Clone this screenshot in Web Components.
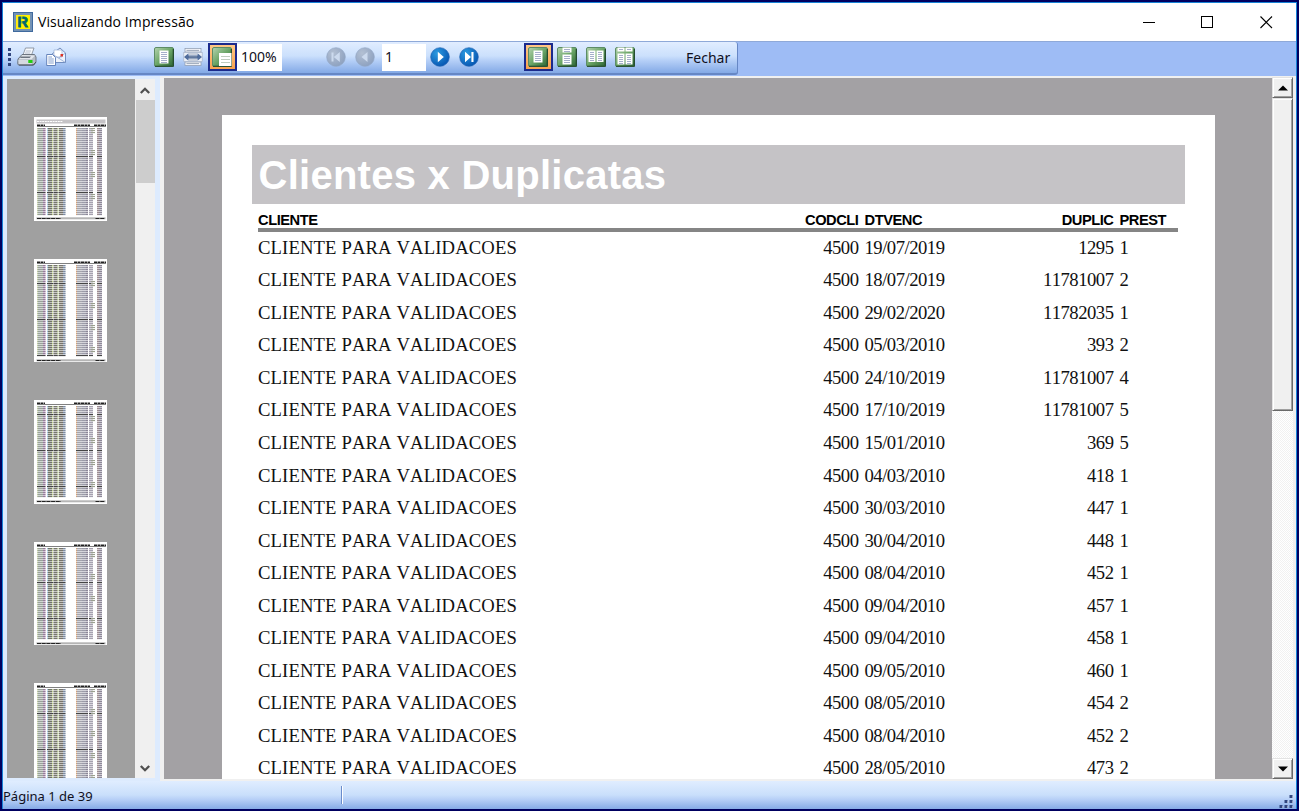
<!DOCTYPE html>
<html lang="pt-BR">
<head>
<meta charset="utf-8">
<title>Visualizando Impressão</title>
<style>
  html, body {
    margin: 0;
    width: 1299px;
    height: 811px;
    overflow: hidden;
    background: #000060;
  }
</style>
</head>
<body>
<print-preview></print-preview>
<script>
const page = (x, y, w, h) => `
  <rect x="${x}" y="${y}" width="${w}" height="${h}" fill="#fff"/>
  ${Array.from({ length: Math.floor((h - 1) / 2) }, (_, i) =>
    `<rect x="${x + 1.5}" y="${y + 1.5 + i * 2}" width="${w - 3}" height="0.9" fill="#9ba6c4"/>`).join("")}`;

const greenTile = (inner) => `
  <defs>
    <linearGradient id="g" x1="0" y1="0" x2="1" y2="1">
      <stop offset="0" stop-color="#b4d3af"/>
      <stop offset="0.5" stop-color="#6aa566"/>
      <stop offset="1" stop-color="#2c6434"/>
    </linearGradient>
  </defs>
  <rect x="0.5" y="0.5" width="19" height="19" rx="1.5" fill="url(#g)" stroke="#5d8c66"/>
  <path d="M1 19.3H19.3V2" fill="none" stroke="#1c4226" stroke-width="1.1"/>
  ${inner}`;

const navDisc = (inner, disabled) => `
  <defs>
    <radialGradient id="n" cx="0.35" cy="0.3" r="0.8">
      <stop offset="0" stop-color="${disabled ? "#b3c0d3" : "#2c9be0"}"/>
      <stop offset="1" stop-color="${disabled ? "#8b9fbe" : "#0350ae"}"/>
    </radialGradient>
  </defs>
  <circle cx="10" cy="10" r="9.3" fill="url(#n)" stroke="${disabled ? "#93a7c5" : "#2466b5"}" stroke-width="0.7"/>
  <g fill="${disabled ? "#ccdaee" : "#fff"}">${inner}</g>`;

const ICONS = {
  print: `
    <path d="M6 8L8.5 1H17L14.5 8Z" fill="#f6f9fd" stroke="#7d8793" stroke-width="0.8"/>
    <path d="M8.8 4H14M8 6H13.3" stroke="#a8b3c2" stroke-width="0.8"/>
    <path d="M1 12L5 7.5H17.5L19 10V15L16.5 18H2Q0.7 18 0.7 16.5Z" fill="#b5bbc4" stroke="#646d78" stroke-width="0.9"/>
    <path d="M5.3 8L2 12.3H14.5L18 8.5Z" fill="#e2e6eb"/>
    <path d="M4 9.5H14L12.6 11H3Z" fill="#6d7580"/>
    <path d="M1.3 13H14.8V17.5H2Z" fill="#d5dae1"/>
    <rect x="11.3" y="13" width="4.2" height="3" fill="#20d010"/>
    <path d="M2 18H16.5L19 15" fill="none" stroke="#464e58"/>`,
  mail: `
    <path d="M6 7L14 1L19.5 6V15.5H6Z" fill="#eef3fc" stroke="#6783b8" stroke-width="0.9"/>
    <path d="M8 3H16V10H8Z" fill="#fff" stroke="#8ea5cf" stroke-width="0.6"/>
    <path d="M6 7L12.5 11L19.5 6M12.5 11L19 15.3" fill="none" stroke="#8da4cf" stroke-width="0.8"/>
    <rect x="14.5" y="7" width="2.5" height="2.5" fill="#dc3326"/>
    <path d="M0.7 7.5H6.5L9.5 10.5V18.5H0.7Z" fill="#fff" stroke="#5878b3" stroke-width="0.9"/>
    <path d="M2.3 10H6M2.3 12H7.8M2.3 14H7.8M2.3 16H7.8" stroke="#7896c8" stroke-width="0.9"/>`,
  whole: greenTile(page(5.5, 3.5, 9, 13)),
  width: `
    <rect x="2" y="1.5" width="16" height="3.5" fill="#f4f6fa" stroke="#8a97ad" stroke-width="0.7"/>
    <rect x="2" y="15" width="16" height="3.5" fill="#f4f6fa" stroke="#8a97ad" stroke-width="0.7"/>
    <path d="M3.5 3.4H16M3.5 16.6H16" stroke="#8793a8" stroke-width="0.8"/>
    <rect x="0.8" y="5.5" width="18.4" height="9" fill="#eef2f8" stroke="#a7b2c6" stroke-width="0.7"/>
    <path d="M1 10L5.5 6.2V8.5H14.5V6.2L19 10L14.5 13.8V11.5H5.5V13.8Z" fill="#506d9c"/>
    <path d="M6 7H14M6 9.4H14M6 11H14M6 13H14" stroke="#8290a8" stroke-width="0.7"/>`,
  zoom: greenTile(`<rect x="7" y="6" width="12.5" height="13" fill="#fff"/>
    <path d="M9 9.5H18M9 12.5H18M9 15.5H18" stroke="#aebfae" stroke-width="0.8"/>`),
  first: navDisc(`<path d="M5.5 5.5H7.5V14.5H5.5ZM13.8 5V15L7.8 10Z"/>`, true),
  prev: navDisc(`<path d="M12.5 5V15L6.5 10Z"/>`, true),
  next: navDisc(`<path d="M7.8 4.7V15.3L13.8 10Z"/>`),
  last: navDisc(`<path d="M6 4.8V15.2L12 10ZM12.4 5H14.5V15H12.4Z"/>`),
  single: greenTile(page(5.5, 3.5, 9, 12)),
  continuous: greenTile(page(5.5, 0.5, 9, 5) + page(5.5, 7.5, 9, 10)),
  facing: greenTile(page(2.5, 3.5, 7, 11.5) + page(10.5, 3.5, 7, 11.5)),
  facingContinuous: greenTile(page(2.5, 0.5, 7, 4) + page(10.5, 0.5, 7, 4) + page(2.5, 6.5, 7, 11) + page(10.5, 6.5, 7, 11)),
};

const ROWS = [
  ["19/07/2019", "1295", "1"],
  ["18/07/2019", "11781007", "2"],
  ["29/02/2020", "11782035", "1"],
  ["05/03/2010", "393", "2"],
  ["24/10/2019", "11781007", "4"],
  ["17/10/2019", "11781007", "5"],
  ["15/01/2010", "369", "5"],
  ["04/03/2010", "418", "1"],
  ["30/03/2010", "447", "1"],
  ["30/04/2010", "448", "1"],
  ["08/04/2010", "452", "1"],
  ["09/04/2010", "457", "1"],
  ["09/04/2010", "458", "1"],
  ["09/05/2010", "460", "1"],
  ["08/05/2010", "454", "2"],
  ["08/04/2010", "452", "2"],
  ["28/05/2010", "473", "2"],
];

class TitleBar extends HTMLElement {
  constructor() {
    super();
    this.attachShadow({ mode: "open" });
    this.shadowRoot.innerHTML = `
      <style>
        :host {
          display: flex;
          align-items: center;
          flex: none;
          height: 38px;
          background: #fff;
          color: #000;
          font: 14px/20px "Open Sans", "Noto Sans", sans-serif;
        }
        .logo { width: 20px; height: 20px; margin: 0 5px 0 10px; }
        .caption { flex: 1; letter-spacing: 0.1px; white-space: nowrap; }
        .control { display: grid; place-items: center; width: 58px; height: 38px; }
        .control.close { width: 60px; }
        svg { display: block; }
      </style>
      <svg class="logo" viewBox="0 0 20 20">
        <rect width="20" height="20" fill="#406a9e"/>
        <rect x="1" y="1" width="18" height="18" fill="#7392b5"/>
        <rect x="3" y="3" width="14" height="14" fill="#fff000"/>
        <text x="4.4" y="15.3" font-family="Liberation Sans" font-size="14.5" font-weight="700" fill="#00696f" stroke="#00696f" stroke-width="0.8" textLength="11">R</text>
        <path d="M8.8 4V16" stroke="#fff000" stroke-width="0.8"/>
      </svg>
      <span class="caption"><slot></slot></span>
      <span class="control"><svg width="13" height="13" shape-rendering="crispEdges"><path d="M0 6.5H12" stroke="#000"/></svg></span>
      <span class="control"><svg width="13" height="13" shape-rendering="crispEdges"><path d="M0.5 0.5H11.5V11.5H0.5Z" fill="none" stroke="#000"/></svg></span>
      <span class="control close"><svg width="13" height="13"><path d="M0.5 0.5L12 12M12 0.5L0.5 12" stroke="#000" stroke-width="1.1"/></svg></span>
    `;
  }
}

class ToolButton extends HTMLElement {
  constructor() {
    super();
    this.attachShadow({ mode: "open" });
  }

  connectedCallback() {
    this.shadowRoot.innerHTML = `
      <style>
        :host {
          display: grid;
          place-items: center;
          box-sizing: border-box;
          width: 29px;
          height: 28px;
          border: 2px solid transparent;
        }
        :host([pressed]) {
          border-color: #1b2a8c;
          background: linear-gradient(#ffc885, #f9a24f);
        }
        svg { display: block; margin-right: 1px; }
      </style>
      <svg width="20" height="20" viewBox="0 0 20 20">${ICONS[this.getAttribute("icon")]}</svg>
    `;
  }
}

class ToolBar extends HTMLElement {
  constructor() {
    super();
    this.attachShadow({ mode: "open" });
    this.shadowRoot.innerHTML = `
      <style>
        :host {
          display: block;
          flex: none;
          height: 35px;
          box-sizing: border-box;
          border-top: 1px solid #8fa9d8;
          background: #9ebcf5;
          font: 14px/20px "Noto Sans", sans-serif;
          color: #10101c;
        }
        .strip {
          display: flex;
          box-sizing: border-box;
          width: 735px;
          height: 33px;
          padding: 1px 0 0 5px;
          background: linear-gradient(#e1edff, #cbe0fc 45%, #b5cff7 60%, #83a9e6);
          border-bottom: 2px solid #6687c5;
          border-right: 1px solid #6687c5;
          border-radius: 0 3px 3px 0;
        }
        .grip {
          width: 3px;
          height: 19px;
          margin: 5px 1px 0 0;
          background: repeating-linear-gradient(#31467f 0 3px, transparent 3px 5px);
        }
        .field {
          box-sizing: border-box;
          height: 27px;
          margin-top: 1px;
          padding-left: 3px;
          line-height: 26px;
          background: #fff;
        }
        .group { display: flex; }
        .output { margin-left: 1px; }
        .views { margin-left: 79px; }
        .zoom { width: 45px; padding-left: 4px; }
        .nav { margin-left: 40px; }
        .number { width: 44px; margin-left: 2px; }
        .layout { margin-left: 40px; }
        .close { margin-left: 46px; line-height: 29px; }
      </style>
      <div class="strip">
        <span class="grip"></span>
        <div class="group output">
          <tool-button icon="print"></tool-button>
          <tool-button icon="mail"></tool-button>
        </div>
        <div class="group views">
          <tool-button icon="whole"></tool-button>
          <tool-button icon="width"></tool-button>
          <tool-button icon="zoom" pressed></tool-button>
          <span class="field zoom">100%</span>
        </div>
        <div class="group nav">
          <tool-button icon="first"></tool-button>
          <tool-button icon="prev"></tool-button>
          <span class="field number">1</span>
          <tool-button icon="next"></tool-button>
          <tool-button icon="last"></tool-button>
        </div>
        <div class="group layout">
          <tool-button icon="single" pressed></tool-button>
          <tool-button icon="continuous"></tool-button>
          <tool-button icon="facing"></tool-button>
          <tool-button icon="facingContinuous"></tool-button>
        </div>
        <span class="close">Fechar</span>
      </div>
    `;
  }
}

class PageThumb extends HTMLElement {
  constructor() {
    super();
    this.attachShadow({ mode: "open" });
  }

  connectedCallback() {
    const titled = this.hasAttribute("titled");
    const top = titled ? 9 : 4;
    const seed = Number(this.getAttribute("seed"));
    // [x, width, colour] of every text column of the shrunken page
    const columns = [
      [3, 1, "#b9c49f"], [4, 5, "#98a29a"], [9, 2.5, "#967b9a"], [13, 1, "#9fc0d8"],
      [14, 4, "#6f7368"], [18, 1, "#c4d395"], [19.5, 4, "#77776f"], [23.5, 1, "#b8cc8b"],
      [25, 4, "#78746c"], [29, 2.5, "#7d8ca3"],
      [42, 1, "#d2a27b"], [43, 5, "#a4a4ad"], [48, 4, "#9b9ba8"], [52, 2, "#8c8798"],
      [55, 4, "#a6a2b0"], [63, 2, "#9d8c91"], [65, 3, "#8d8798"],
    ];
    let marks = "";
    for (let y = top + 2, i = 0; y < 98; y += 2, i += 1) {
      const dark = (i + seed * 5) % 18 === 14;
      columns.forEach(([x, w, fill]) => {
        marks += `<rect x="${x}" y="${y}" width="${w}" height="1.1" fill="${dark ? "#454545" : fill}"/>`;
      });
      if ((i + seed * 3) % 11 < 3) {
        marks += `<rect x="57" y="${y}" width="4" height="1.1" fill="#9aa08f"/>`;
      }
    }
    const tints = columns.map(([x, w, fill]) =>
      `<rect x="${x}" y="${top + 2}" width="${w}" height="${97 - top - 2}" fill="${fill}" opacity="0.36"/>`).join("");
    this.shadowRoot.innerHTML = `
      <style>
        :host { display: block; width: 73px; height: 103.5px; background: #fff; }
        svg { display: block; }
      </style>
      <svg width="73" height="103.5" viewBox="0 0 73 103.5">
        ${titled ? `<rect x="2.5" y="2.5" width="69" height="4" fill="#c5c3c6"/><path d="M3 4.5H29" stroke="#fff" stroke-dasharray="2 0.6"/>` : ""}
        ${tints}${marks}
        <path d="M3 ${top - 0.6}H11M40 ${top - 0.6}H56M60 ${top - 0.6}H72" stroke="#222" stroke-width="1.6" stroke-dasharray="3 0.5"/>
        <rect x="3" y="${top}" width="69" height="1" fill="#808080"/>
        <rect x="2.5" y="100.3" width="69" height="2" fill="#b5b5b5"/>
        <path d="M3 101.5H27M61.5 101.5H71" stroke="#222" stroke-width="1.2" stroke-dasharray="4 0.7"/>
      </svg>
    `;
  }
}

class ThumbList extends HTMLElement {
  constructor() {
    super();
    this.attachShadow({ mode: "open" });
    this.shadowRoot.innerHTML = `
      <style>
        :host { display: flex; height: 699px; overflow: hidden; }
        .pages {
          display: flex;
          flex-direction: column;
          gap: 38px;
          width: 128px;
          box-sizing: border-box;
          padding: 38px 0 0 27px;
          background: #a0a0a0;
          overflow: hidden;
        }
        page-thumb { flex: none; }
        .scroll {
          display: flex;
          flex-direction: column;
          align-items: center;
          width: 20px;
          background: #f0f0f0;
        }
        .arrow { display: block; width: 20px; height: 21px; }
        .thumb { width: 19px; height: 83px; background: #cdcdcd; }
        .rest { flex: 1; }
      </style>
      <div class="pages">
        <page-thumb titled seed="0"></page-thumb>
        <page-thumb seed="1"></page-thumb>
        <page-thumb seed="2"></page-thumb>
        <page-thumb seed="3"></page-thumb>
        <page-thumb seed="4"></page-thumb>
      </div>
      <div class="scroll">
        <svg class="arrow"><path d="M5.8 14L10 9.8L14.2 14" fill="none" stroke="#505050" stroke-width="2.3"/></svg>
        <div class="thumb"></div>
        <div class="rest"></div>
        <svg class="arrow"><path d="M5.8 9L10 13.2L14.2 9" fill="none" stroke="#505050" stroke-width="2.3"/></svg>
      </div>
    `;
  }
}

class ClassicScroll extends HTMLElement {
  constructor() {
    super();
    this.attachShadow({ mode: "open" });
    this.shadowRoot.innerHTML = `
      <style>
        :host {
          display: flex;
          flex-direction: column;
          width: 21px;
          background: repeating-conic-gradient(#f1f1f1 0 25%, #fff 0 50%) 0 0 / 2px 2px;
        }
        .box {
          display: grid;
          place-items: center;
          box-sizing: border-box;
          height: 21px;
          background: #f0f0f0;
          border: 1px solid;
          border-color: #e3e3e3 #696969 #696969 #e3e3e3;
          box-shadow: inset 1px 1px #fff, inset -1px -1px #a0a0a0;
        }
        .thumb { height: 313px; }
        .rest { flex: 1; }
      </style>
      <div class="box"><svg width="10" height="6"><path d="M0 5.5L5 0.5L10 5.5Z"/></svg></div>
      <div class="box thumb"></div>
      <div class="rest"></div>
      <div class="box"><svg width="10" height="6"><path d="M0 0.5L5 5.5L10 0.5Z"/></svg></div>
    `;
  }
}

class ReportPage extends HTMLElement {
  constructor() {
    super();
    this.attachShadow({ mode: "open" });
    this.shadowRoot.innerHTML = `
      <style>
        :host {
          display: block;
          box-sizing: border-box;
          width: 993px;
          padding: 30px 30px 0;
          background: #fff;
          color: #111;
          font: 18.67px/32.53px "Liberation Serif", serif;
          font-kerning: none;
        }
        h1 {
          margin: 0;
          height: 59px;
          padding-left: 7px;
          background: #c5c3c6;
          color: #fff;
          font: bold 40px/60px "Liberation Sans", sans-serif;
          letter-spacing: 0.26px;
        }
        .row {
          display: grid;
          grid-template-columns: 500px 101px 148px 107px 58px;
          margin-left: 6px;
          height: 32.53px;
          white-space: nowrap;
        }
        .head {
          width: 920px;
          height: 24px;
          border-bottom: 4px solid #858585;
          color: #000;
          font: bold 14.67px/32px "Liberation Sans", sans-serif;
          letter-spacing: -0.45px;
        }
        .rows { margin-top: -0.1px; }
        .right { text-align: right; }
        .after { padding-left: 6px; }
        .name { padding-left: 0.5px; }
        .data span { letter-spacing: -0.5px; }
        .data .name { letter-spacing: 0.13px; }
      </style>
      <h1>Clientes x Duplicatas</h1>
      <div class="row head">
        <span class="name">CLIENTE</span><span class="right">CODCLI</span><span class="after">DTVENC</span>
        <span class="right">DUPLIC</span><span class="after">PREST</span>
      </div>
      <div class="rows"></div>
    `;
    this.shadowRoot.querySelector(".rows").innerHTML = ROWS.map(([due, doc, part]) => `
      <div class="row data">
        <span class="name">CLIENTE PARA VALIDACOES</span><span class="right">4500</span><span class="after">${due}</span>
        <span class="right">${doc}</span><span class="after">${part}</span>
      </div>
    `).join("");
  }
}

class StatusBar extends HTMLElement {
  constructor() {
    super();
    this.attachShadow({ mode: "open" });
    this.shadowRoot.innerHTML = `
      <style>
        :host {
          display: flex;
          flex: none;
          height: 28px;
          background: linear-gradient(#e0edff, #c9dffb 50%, #b4cdf6 68%, #86abe6);
          font: 13px/31px "Noto Sans", sans-serif;
          color: #10101c;
        }
        .panel {
          width: 338px;
          white-space: nowrap;
        }
        .divider { width: 1px; height: 18px; margin-top: 5px; background: #6a8ccb; border-right: 1px solid #fff; }
        .size { margin: 13px 3px 0 auto; }
      </style>
      <span class="panel"><slot></slot></span>
      <span class="divider"></span>
      <svg class="size" width="14" height="14">
        <g fill="#fff"><path d="M12 2h2v2h-2zM12 7h2v2h-2zM7 7h2v2h-2zM12 12h2v2h-2zM7 12h2v2h-2zM2 12h2v2h-2z"/></g>
        <g fill="#31467f"><path d="M10.5 1h3v3h-3zM10.5 6h3v3h-3zM5.5 6h3v3h-3zM10.5 11h3v3h-3zM5.5 11h3v3h-3zM0.5 11h3v3h-3z"/></g>
      </svg>
    `;
  }
}

class PrintPreview extends HTMLElement {
  constructor() {
    super();
    this.attachShadow({ mode: "open" });
    this.shadowRoot.innerHTML = `
      <style>
        :host {
          display: flex;
          flex-direction: column;
          box-sizing: border-box;
          width: 1299px;
          height: 811px;
          border: 2px solid #000060;
        }
        .window {
          display: flex;
          flex-direction: column;
          flex: 1;
          min-height: 0;
          border: 1px solid #1883d7;
          border-bottom-width: 0;
          background: #f0f0f0;
        }
        .body {
          display: flex;
          flex: 1;
          min-height: 0;
          overflow: hidden;
        }
        .side { padding: 3px 5px 0 4px; background: #ddebfe; }
        .view {
          flex: 1;
          display: flex;
          justify-content: center;
          margin: 2px 0 2px 4px;
          padding-top: 37px;
          background: #a3a1a4;
          overflow: hidden;
          box-sizing: border-box;
        }
        classic-scroll { margin: 1px 3px 2px 0; }
      </style>
      <div class="window">
        <title-bar>Visualizando Impressão</title-bar>
        <tool-bar></tool-bar>
        <div class="body">
          <div class="side"><thumb-list></thumb-list></div>
          <div class="view"><report-page></report-page></div>
          <classic-scroll></classic-scroll>
        </div>
        <status-bar>Página 1 de 39</status-bar>
      </div>
    `;
  }
}

customElements.define("title-bar", TitleBar);
customElements.define("tool-button", ToolButton);
customElements.define("tool-bar", ToolBar);
customElements.define("page-thumb", PageThumb);
customElements.define("thumb-list", ThumbList);
customElements.define("classic-scroll", ClassicScroll);
customElements.define("report-page", ReportPage);
customElements.define("status-bar", StatusBar);
customElements.define("print-preview", PrintPreview);
</script>
</body>
</html>
